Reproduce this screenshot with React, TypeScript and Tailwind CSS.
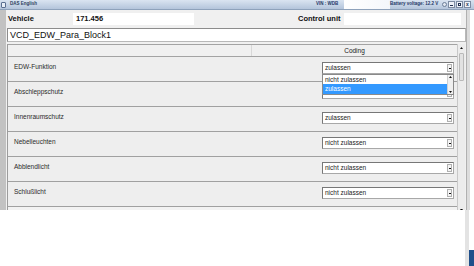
import React from 'react'

type Row = {
  label: string
  value: string
}

const rows: Row[] = [
  { label: 'EDW-Funktion', value: 'zulassen' },
  { label: 'Abschleppschutz', value: 'zulassen' },
  { label: 'Innenraumschutz', value: 'zulassen' },
  { label: 'Nebelleuchten', value: 'nicht zulassen' },
  { label: 'Abblendlicht', value: 'nicht zulassen' },
  { label: 'Schlußlicht', value: 'nicht zulassen' },
]

function Arrow({ up = false }: { up?: boolean }) {
  return (
    <svg width="3" height="2" viewBox="0 0 3 2" className="block">
      <path d={up ? 'M0 2 L1.5 0 L3 2 Z' : 'M0 0 L3 0 L1.5 2 Z'} fill="#111" />
    </svg>
  )
}

function Select({ value }: { value: string }) {
  return (
    <div className="flex h-[12px] w-[132px] border border-[#a8a8a8] border-l-[#777] border-t-[#777] bg-white">
      <span className="flex-1 pl-[2px] text-[6.5px] leading-[10px] text-[#222]">{value}</span>
      <span className="my-[1px] mr-[1px] flex w-[5px] items-center justify-center border border-[#b0b0b0] bg-[#f4f4f4]">
        <span className="block h-[1px] w-[2px] bg-[#111]" />
      </span>
    </div>
  )
}

function DropList() {
  return (
    <div className="absolute left-[314px] top-[30px] z-10 flex h-[21px] w-[132px] border border-[#8a8a8a] bg-white">
      <div className="flex flex-1 flex-col">
        <span className="h-[9px] pl-[2px] text-[6.5px] leading-[9px] text-[#222]">nicht zulassen</span>
        <span className="h-[10px] bg-[#3399ff] pl-[2px] text-[6.5px] leading-[10px] text-white">zulassen</span>
      </div>
      <div className="flex w-[6px] flex-col items-center justify-between border-l border-[#d0d0d0] bg-[#f0f0f0] py-[1px]">
        <Arrow up />
        <Arrow />
      </div>
    </div>
  )
}

export default function App() {
  return (
    <div className="relative h-[266px] w-[474px] overflow-hidden bg-white font-['Liberation_Sans',Arial,sans-serif]">
      {/* title bar */}
      <div className="flex h-[10px] w-[474px] items-center border-b border-[#8ea2bb] bg-gradient-to-b from-[#dae4f1] to-[#b4c5db]">
        <span className="ml-[1px] h-[6px] w-[5px] rounded-[1px] border border-[#5a6f90] bg-[#e8eef6]" />
        <span className="ml-[4px] w-[306px] text-[4.5px] font-bold text-[#2c3e5c]">DAS English</span>
        <span className="w-[28px] text-[4.5px] font-bold text-[#1f3867]">VIN : WDB</span>
        <span className="h-[9px] w-[46px] bg-gradient-to-r from-white to-[#f4f7fb]" />
        <span className="w-[52px] text-[4.5px] font-bold text-[#1f3867]">Battery voltage: 12.2 V</span>
        <span className="h-[5px] w-[5px] rounded-full border border-[#6d7f99] bg-[#dfe6ef]" />
        <span className="ml-[1px] flex h-[7px] w-[7px] items-end justify-center border border-[#7d8ca3] bg-[#eef2f8] pb-[1px]">
          <span className="block h-[1px] w-[3px] bg-[#203050]" />
        </span>
        <span className="ml-[1px] flex h-[7px] w-[7px] items-center justify-center border border-[#7d8ca3] bg-[#eef2f8]">
          <span className="block h-[3px] w-[3px] border border-[#203050]" />
        </span>
        <span className="ml-[1px] flex h-[7px] w-[7px] items-center justify-center border border-[#7d8ca3] bg-[#eef2f8] text-[5px] font-bold leading-none text-[#203050]">
          x
        </span>
      </div>

      <div className="flex h-[200px] w-[470px]">
        <div className="w-[6px] bg-[#c2c2c2]" />

        <div className="flex w-[460px] flex-col bg-[#f0f0f0]">
          {/* vehicle / control unit */}
          <div className="flex h-[17px] items-start pt-[3px]">
            <span className="w-[67px] pl-[2px] text-[7.5px] font-bold leading-[12px] text-[#111]">Vehicle</span>
            <span className="h-[12px] w-[121px] bg-white pl-[3px] text-[7.5px] font-bold leading-[12px] text-[#111]">
              171.456
            </span>
            <span className="ml-[104px] w-[46px] text-[7.5px] font-bold leading-[12px] text-[#111]">Control unit</span>
            <span className="h-[12px] w-[117px] bg-white" />
          </div>

          {/* block name */}
          <div className="ml-[1px] mt-[1px] h-[14px] w-[459px] border border-[#b8b8b8] border-l-[#8c8c8c] border-t-[#8c8c8c] bg-white pl-[2px] text-[9px] leading-[12px] text-[#111]">
            VCD_EDW_Para_Block1
          </div>

          {/* table */}
          <div className="ml-[1px] mt-[2px] flex h-[166px] overflow-hidden">
            <div className="relative w-[450px] border-l border-[#9c9c9c] bg-[#eeeeee]">
              <div className="flex h-[13px] border-b border-t border-[#a3a3a3] bg-[#f0f0f0]">
                <span className="ml-[243px] w-[206px] border-l border-[#d8d8d8] text-center text-[6.5px] leading-[11px] text-[#222]">
                  Coding
                </span>
              </div>
              {rows.map((row) => (
                <div key={row.label} className="flex h-[25px] items-start border-b border-[#a0a0a0]">
                  <span className="w-[314px] pl-[6px] pt-[6px] text-[6.5px] leading-[8px] text-[#2a2a2a]">
                    {row.label}
                  </span>
                  <div className="mt-[5px]">
                    <Select value={row.value} />
                  </div>
                </div>
              ))}
              <div className="h-[25px] bg-[#f2f2f2]" />
              <DropList />
            </div>

            {/* scrollbar */}
            <div className="flex w-[8px] flex-col items-center border-l border-[#c8c8c8] bg-[#ececec]">
              <div className="mt-[1px] flex h-[5px] w-[6px] items-center justify-center">
                <Arrow up />
              </div>
              <div className="mt-[3px] h-[28px] w-[5px] rounded-[1px] border border-[#b9b9b9] bg-[#e2e2e2]" />
              <div className="flex-1" />
              <div className="mb-[-2px] flex h-[5px] w-[6px] items-center justify-center">
                <Arrow />
              </div>
            </div>
          </div>
        </div>

        <div className="w-[4px] border-l border-[#b0b0b0] bg-[#dcdcdc]" />
      </div>

      {/* below window */}
      <div className="flex h-[56px] w-[474px]">
        <div className="w-[465px]" />
        <div className="w-[4px] bg-[#e3e3e3]" />
        <div className="flex w-[5px] flex-col">
          <div className="flex-1" />
          <div className="h-[16px] bg-[#1f4f8a]" />
        </div>
      </div>
    </div>
  )
}
